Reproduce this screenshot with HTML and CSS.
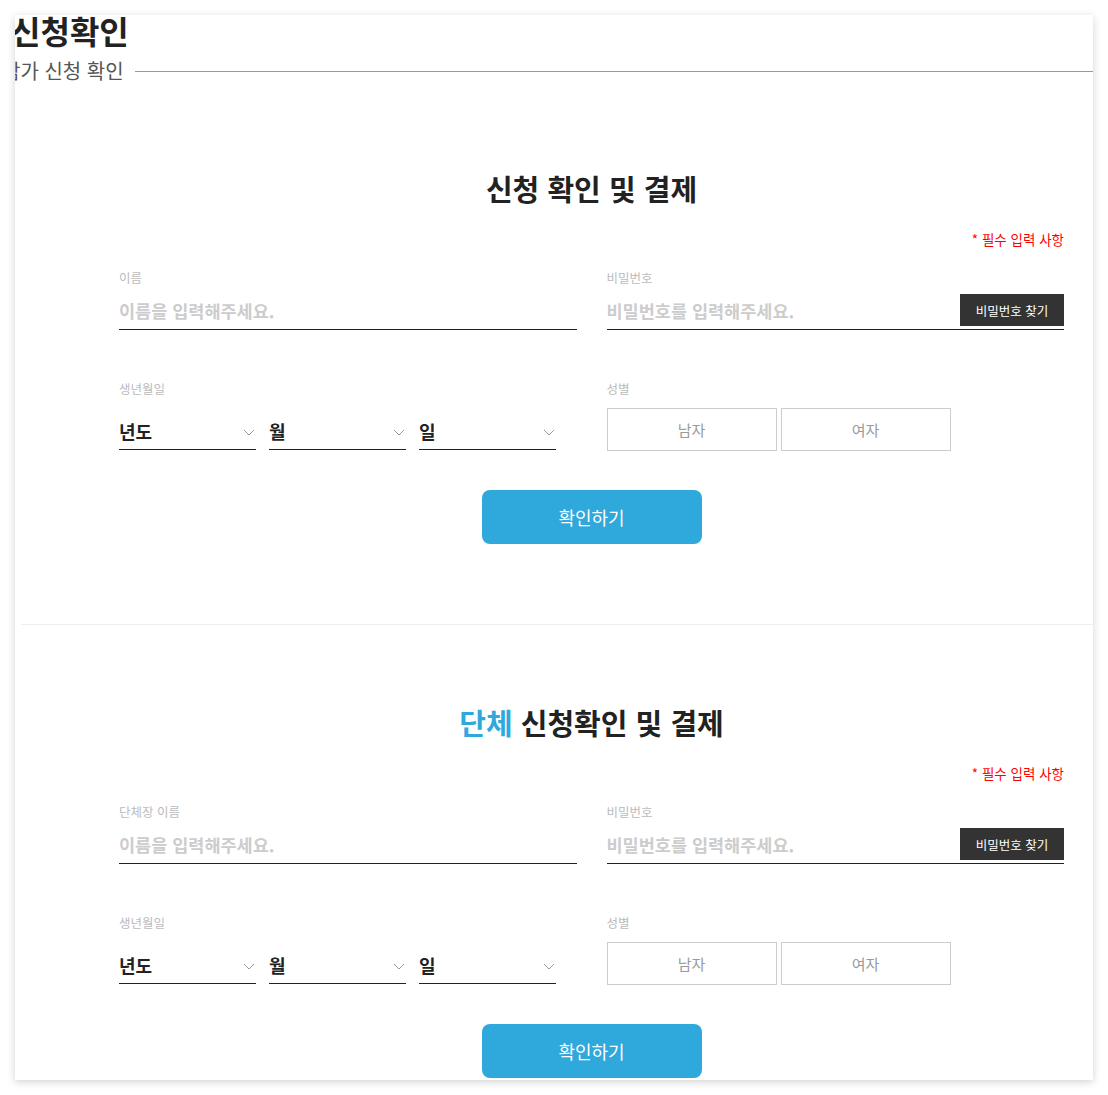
FILE: index.html
```html
<!DOCTYPE html>
<html lang="ko">
<head>
    <meta charset="UTF-8">
    <meta name="viewport" content="width=device-width, initial-scale=1.0">
    <title>신청확인</title>
    <link rel="stylesheet" href="styles.css">
</head>
<body>
    <div class="card">
        <div class="page-head">
            <h1 class="page-title">신청확인</h1>
            <div class="page-sub">
                <span>참가 신청 확인</span>
                <span class="sub-line"></span>
            </div>
        </div>

        <section class="confirm first">
            <h2 class="confirm-title">신청 확인 및 결제</h2>
            <p class="required">* 필수 입력 사항</p>
            <div class="form-grid">
                <div class="field">
                    <label class="field-label">이름</label>
                    <div class="input-wrap">
                        <input type="text" placeholder="이름을 입력해주세요.">
                    </div>
                </div>
                <div class="field">
                    <label class="field-label">비밀번호</label>
                    <div class="input-wrap">
                        <input type="password" placeholder="비밀번호를 입력해주세요.">
                        <button class="find-btn">비밀번호 찾기</button>
                    </div>
                </div>
                <div class="field">
                    <label class="field-label">생년월일</label>
                    <div class="birth">
                        <div class="select"><span>년도</span><svg width="12" height="7" viewBox="0 0 12 7"><path d="M1 1l5 5 5-5" fill="none" stroke="#999" stroke-width="1"/></svg></div>
                        <div class="select"><span>월</span><svg width="12" height="7" viewBox="0 0 12 7"><path d="M1 1l5 5 5-5" fill="none" stroke="#999" stroke-width="1"/></svg></div>
                        <div class="select"><span>일</span><svg width="12" height="7" viewBox="0 0 12 7"><path d="M1 1l5 5 5-5" fill="none" stroke="#999" stroke-width="1"/></svg></div>
                    </div>
                </div>
                <div class="field">
                    <label class="field-label">성별</label>
                    <div class="gender">
                        <button class="gender-btn">남자</button>
                        <button class="gender-btn">여자</button>
                    </div>
                </div>
            </div>
            <button class="submit">확인하기</button>
        </section>

        <div class="divider"></div>

        <section class="confirm">
            <h2 class="confirm-title"><span class="accent">단체</span> 신청확인 및 결제</h2>
            <p class="required">* 필수 입력 사항</p>
            <div class="form-grid">
                <div class="field">
                    <label class="field-label">단체장 이름</label>
                    <div class="input-wrap">
                        <input type="text" placeholder="이름을 입력해주세요.">
                    </div>
                </div>
                <div class="field">
                    <label class="field-label">비밀번호</label>
                    <div class="input-wrap">
                        <input type="password" placeholder="비밀번호를 입력해주세요.">
                        <button class="find-btn">비밀번호 찾기</button>
                    </div>
                </div>
                <div class="field">
                    <label class="field-label">생년월일</label>
                    <div class="birth">
                        <div class="select"><span>년도</span><svg width="12" height="7" viewBox="0 0 12 7"><path d="M1 1l5 5 5-5" fill="none" stroke="#999" stroke-width="1"/></svg></div>
                        <div class="select"><span>월</span><svg width="12" height="7" viewBox="0 0 12 7"><path d="M1 1l5 5 5-5" fill="none" stroke="#999" stroke-width="1"/></svg></div>
                        <div class="select"><span>일</span><svg width="12" height="7" viewBox="0 0 12 7"><path d="M1 1l5 5 5-5" fill="none" stroke="#999" stroke-width="1"/></svg></div>
                    </div>
                </div>
                <div class="field">
                    <label class="field-label">성별</label>
                    <div class="gender">
                        <button class="gender-btn">남자</button>
                        <button class="gender-btn">여자</button>
                    </div>
                </div>
            </div>
            <button class="submit">확인하기</button>
        </section>
    </div>
</body>
</html>
```

FILE: styles.css
```css
body {
    margin: 0;
    background-color: #fff;
    font-family: "Noto Sans CJK KR", "Noto Sans", sans-serif;
    color: #222;
}
.card {
    margin: 15px;
    height: 1065px;
    overflow: hidden;
    background-color: #fff;
    box-shadow: 0 2px 8px rgba(0, 0, 0, 0.18);
}
.page-head {
    margin-top: -4px;
    margin-left: -4px;
}
.page-title {
    margin: 0;
    font-size: 32px;
    line-height: 38px;
    font-weight: bold;
    color: #222;
}
.page-sub {
    display: flex;
    align-items: center;
    margin-top: 8px;
    margin-left: -9px;
    font-size: 20px;
    line-height: 28px;
    color: #555;
}
.sub-line {
    flex: 1;
    height: 1px;
    margin-left: 11px;
    background-color: #999;
}
.confirm {
    padding: 77px 29px 80px 104px;
}
.confirm.first {
    padding-top: 83px;
}
.confirm-title {
    margin: 0;
    text-align: center;
    font-size: 29px;
    line-height: 40px;
    font-weight: bold;
    color: #222;
}
.accent {
    color: #2fa8dc;
}
.required {
    margin: 21px 0 0;
    text-align: right;
    font-size: 13.5px;
    line-height: 20px;
    color: #f00;
}
.form-grid {
    display: grid;
    grid-template-columns: repeat(2, minmax(0, 1fr));
    column-gap: 30px;
    row-gap: 50px;
    margin-top: 20px;
}
.field-label {
    display: block;
    font-size: 12.5px;
    line-height: 18px;
    color: #bbb;
}
.input-wrap {
    display: flex;
    align-items: center;
    height: 38px;
    margin-top: 4px;
    border-bottom: 1px solid #222;
}
.input-wrap input {
    flex: 1;
    width: 0;
    min-width: 0;
    border: none;
    outline: none;
    padding: 0;
    font-family: inherit;
    font-size: 17.5px;
    font-weight: bold;
    color: #222;
    background: none;
}
.input-wrap input::placeholder {
    color: #ccc;
}
.find-btn {
    flex: none;
    width: 104px;
    height: 32px;
    border: none;
    background-color: #333;
    color: #fff;
    font-family: inherit;
    font-size: 12.5px;
    cursor: pointer;
}
.birth {
    display: flex;
    gap: 13px;
    margin-top: 10px;
}
.select {
    display: flex;
    align-items: center;
    justify-content: space-between;
    width: 137px;
    height: 37px;
    padding-top: 4px;
    border-bottom: 1px solid #222;
    font-size: 18px;
    font-weight: bold;
    color: #222;
}
.select svg {
    margin-right: 1px;
    margin-top: 4px;
}
.gender {
    display: flex;
    gap: 4px;
    margin-top: 10px;
}
.gender-btn {
    width: 170px;
    height: 43px;
    border: 1px solid #ccc;
    background-color: #fff;
    color: #999;
    font-family: inherit;
    font-size: 15px;
    cursor: pointer;
}
.submit {
    display: block;
    width: 220px;
    height: 54px;
    margin: 39px auto 0;
    border: none;
    border-radius: 8px;
    background-color: #2fa8dc;
    color: #fff;
    font-family: inherit;
    font-size: 18px;
    cursor: pointer;
}
.divider {
    height: 1px;
    margin-left: 6px;
    background-color: #eee;
}
```
